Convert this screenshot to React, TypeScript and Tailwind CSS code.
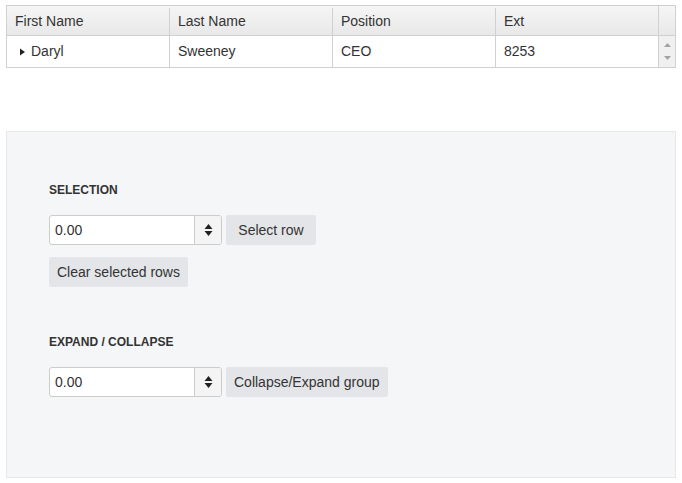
import React from 'react';

const COLUMNS = ['First Name', 'Last Name', 'Position', 'Ext'];

function Spinner() {
  return (
    <div className="flex h-[30px] w-[173px] rounded-[3px] border border-[#cccccc] bg-white overflow-hidden">
      <div className="flex flex-1 items-center pl-[5px] text-[14px] text-[#333]">0.00</div>
      <div className="flex w-[27px] items-center justify-center border-l border-[#cccccc] bg-[#f4f4f4]">
        <svg width="9" height="16" viewBox="0 0 9 16">
          <path d="M4.5 2 L8.5 7 L0.5 7 Z" fill="#222" />
          <path d="M4.5 14 L8.5 9 L0.5 9 Z" fill="#222" />
        </svg>
      </div>
    </div>
  );
}

function Btn({ label, wide }: { label: string; wide?: boolean }) {
  return (
    <button
      className={`h-[30px] rounded-[2px] bg-[#e4e5e8] px-[8px] text-[14px] text-[#333] ${wide ? 'w-[90px]' : ''}`}
    >
      {label}
    </button>
  );
}

export default function App() {
  return (
    <div
      className="w-[682px] h-[483px] bg-white px-[6px] pt-[5px] text-[#333]"
      style={{ fontFamily: '"Liberation Sans", Arial, sans-serif' }}
    >
      {/* Grid */}
      <div className="flex border border-[#d0d0d0] text-[14px]">
        <div className="flex">
          <div className="flex flex-col">
            <div className="flex h-[30px] border-b border-[#d0d0d0] bg-gradient-to-b from-[#f6f6f6] to-[#e8e8e8] pt-[2px]">
              {COLUMNS.map((c, i) => (
                <div
                  key={c}
                  className={`flex items-center pl-[8px] ${i > 0 ? 'w-[163px] border-l border-[#d0d0d0]' : 'w-[162px]'}`}
                >
                  {c}
                </div>
              ))}
            </div>
            <div className="flex h-[31px]">
              <div className="flex w-[162px] items-center pl-[12px]">
                <svg width="7" height="8" viewBox="0 0 7 8" className="mr-[5px]">
                  <path d="M1 0.5 L6 4 L1 7.5 Z" fill="#222" />
                </svg>
                Daryl
              </div>
              <div className="flex w-[163px] items-center border-l border-[#d0d0d0] pl-[8px]">Sweeney</div>
              <div className="flex w-[163px] items-center border-l border-[#d0d0d0] pl-[8px]">CEO</div>
              <div className="flex w-[163px] items-center border-l border-[#d0d0d0] pl-[8px]">8253</div>
            </div>
          </div>
        </div>
        <div className="flex flex-1 flex-col border-l border-[#d0d0d0]">
          <div className="h-[30px] border-b border-[#d0d0d0] bg-gradient-to-b from-[#f6f6f6] to-[#e8e8e8]" />
          <div className="flex h-[31px] flex-col items-center justify-between bg-[#f0f0f0] py-[7px]">
            <svg width="7" height="4" viewBox="0 0 7 4">
              <path d="M3.5 0 L7 4 L0 4 Z" fill="#a3a3a3" />
            </svg>
            <svg width="7" height="4" viewBox="0 0 7 4">
              <path d="M0 0 L7 0 L3.5 4 Z" fill="#a3a3a3" />
            </svg>
          </div>
        </div>
      </div>

      {/* Panel */}
      <div className="mt-[63px] h-[347px] border border-[#e6e8eb] bg-[#f5f6f8] pl-[42px] pt-[51px]">
        <div className="text-[12px] font-bold leading-[14px]">SELECTION</div>
        <div className="mt-[18px] flex gap-[4px]">
          <Spinner />
          <Btn label="Select row" wide />
        </div>
        <div className="mt-[12px]">
          <Btn label="Clear selected rows" />
        </div>

        <div className="mt-[48px] text-[12px] font-bold leading-[14px]">EXPAND / COLLAPSE</div>
        <div className="mt-[18px] flex gap-[4px]">
          <Spinner />
          <Btn label="Collapse/Expand group" />
        </div>
      </div>
    </div>
  );
}
